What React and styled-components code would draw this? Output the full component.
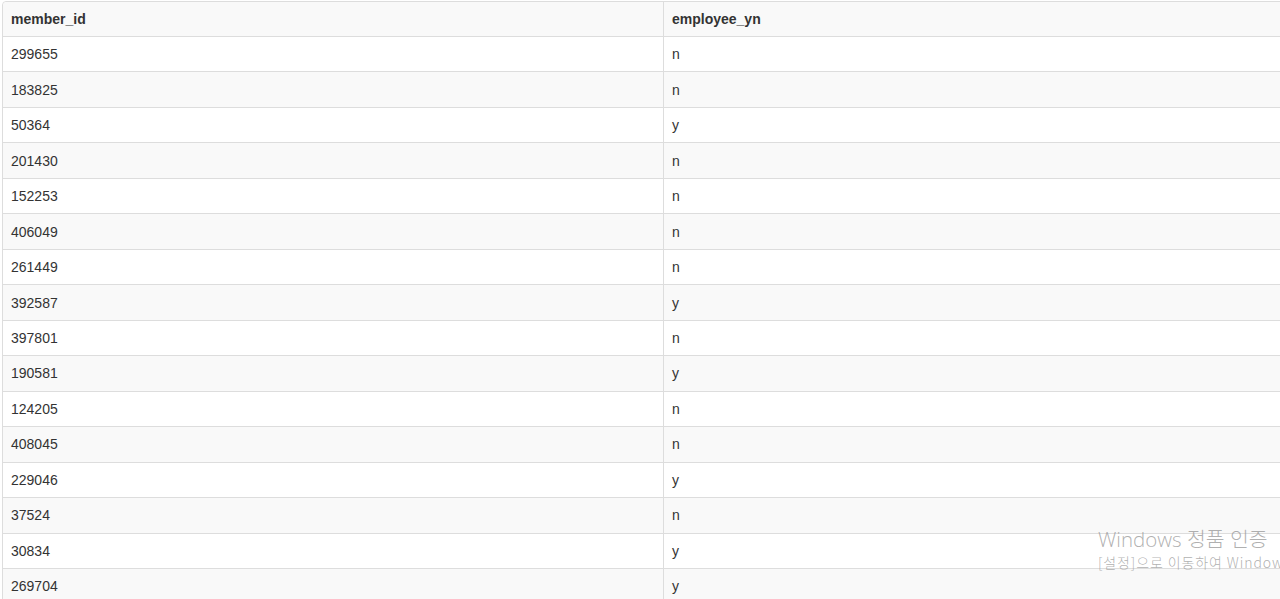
import React from "react";
import styled, { createGlobalStyle } from "styled-components";

const GlobalStyle = createGlobalStyle`
  html, body {
    margin: 0;
    padding: 0;
    background: #fff;
    overflow: hidden;
  }
  body {
    font-family: "Liberation Sans", Arial, sans-serif;
    font-size: 14px;
    color: #333;
  }
`;

const rows = [
  ["299655", "n"],
  ["183825", "n"],
  ["50364", "y"],
  ["201430", "n"],
  ["152253", "n"],
  ["406049", "n"],
  ["261449", "n"],
  ["392587", "y"],
  ["397801", "n"],
  ["190581", "y"],
  ["124205", "n"],
  ["408045", "n"],
  ["229046", "y"],
  ["37524", "n"],
  ["30834", "y"],
  ["269704", "y"],
];

const Page = styled.div`
  padding: 1px 0 0 2px;
  width: 1280px;
  height: 599px;
  box-sizing: border-box;
  overflow: hidden;
  position: relative;
`;

const Table = styled.table`
  width: 1322px;
  border-collapse: separate;
  border-spacing: 0;
  border: 1px solid #ddd;
  border-radius: 4px;
  table-layout: fixed;
`;

const HeadCell = styled.th`
  height: 34px;
  padding: 0 8px;
  text-align: left;
  font-weight: bold;
  font-size: 14px;
  color: #333;
  background: #f9f9f9;
  border-left: ${({ $first }) => ($first ? "none" : "1px solid #ddd")};
  border-bottom: 1px solid #ddd;
  box-sizing: content-box;
  border-top-left-radius: ${({ $first }) => ($first ? "4px" : "0")};
`;

const Row = styled.tr`
  background: ${({ $striped }) => ($striped ? "#f9f9f9" : "#fff")};
`;

const Cell = styled.td`
  height: 34.47px;
  padding: 0 8px;
  font-size: 14px;
  color: #333;
  border-left: ${({ $first }) => ($first ? "none" : "1px solid #ddd")};
  border-bottom: 1px solid #ddd;
  box-sizing: content-box;
`;

const Watermark = styled.div`
  position: absolute;
  left: 1098px;
  top: 526px;
  white-space: nowrap;
  color: rgba(150, 150, 150, 0.75);
  pointer-events: none;
`;

const WmTitle = styled.div`
  font-size: 20.5px;
  line-height: 27px;
  font-family: "Open Sans", "Noto Sans CJK KR", sans-serif;
  font-weight: 300;
`;

const WmSub = styled.div`
  font-size: 14px;
  line-height: 18px;
  font-family: "Noto Sans CJK KR", sans-serif;
  font-weight: 300;
  letter-spacing: 0.9px;
`;

export default function App() {
  return (
    <Page>
      <GlobalStyle />
      <Table>
        <colgroup>
          <col style={{ width: "660px" }} />
          <col />
        </colgroup>
        <thead>
          <tr>
            <HeadCell $first>member_id</HeadCell>
            <HeadCell>employee_yn</HeadCell>
          </tr>
        </thead>
        <tbody>
          {rows.map(([id, yn], i) => (
            <Row key={id} $striped={i % 2 === 1}>
              <Cell $first>{id}</Cell>
              <Cell>{yn}</Cell>
            </Row>
          ))}
        </tbody>
      </Table>
      <Watermark>
        <WmTitle>Windows 정품 인증</WmTitle>
        <WmSub>[설정]으로 이동하여 Windows를 정품 인증합니다.</WmSub>
      </Watermark>
    </Page>
  );
}
